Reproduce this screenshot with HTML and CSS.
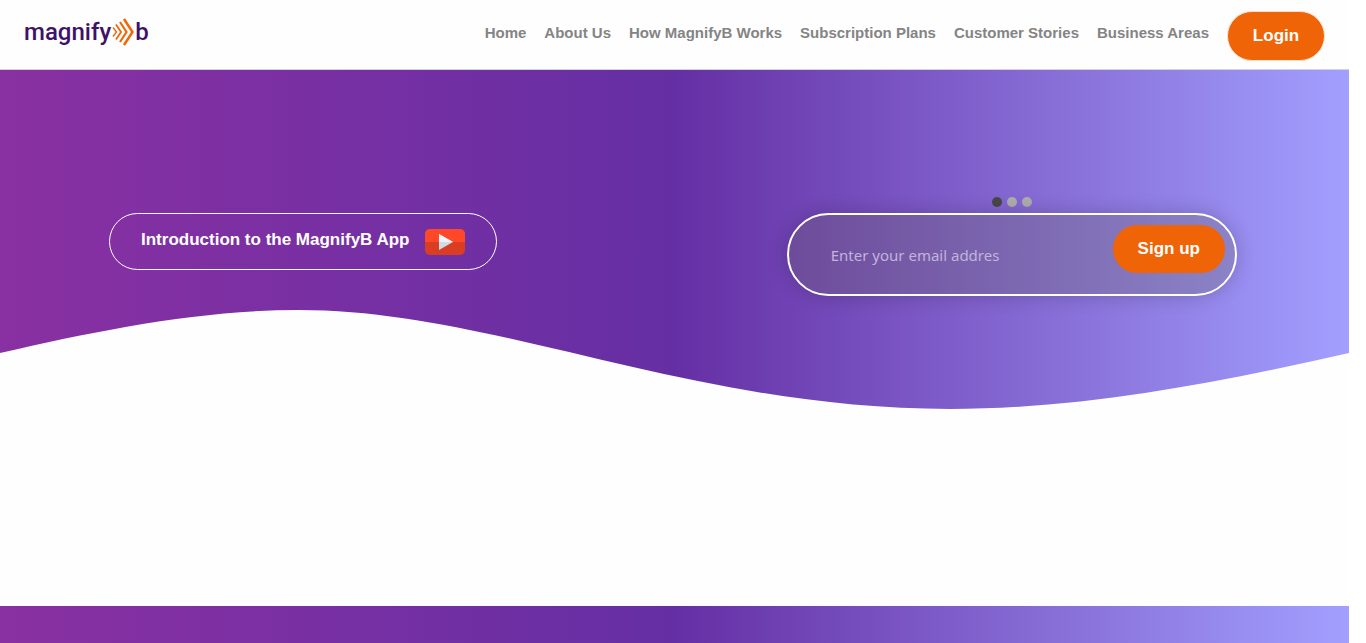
FILE: index.html
```html
<!DOCTYPE html>
<html lang="en">
<head>
<meta charset="utf-8">
<meta name="viewport" content="width=device-width, initial-scale=1">
<title>MagnifyB</title>
<link rel="stylesheet" href="styles.css">
</head>
<body>
<div class="page">
  <header class="header">
    <a class="logo" href="#" aria-label="MagnifyB home">
      <span>magnify</span>
      <svg class="logo-mark" viewBox="0 0 22 28" aria-hidden="true">
        <path d="M1 9.500L4.500 14L1 18.500" stroke-width="1.400"/>
        <path d="M4 6.500L9 14L4 21.500" stroke-width="1.800"/>
        <path d="M8 4L14.500 14L8 24" stroke-width="2.200"/>
        <path d="M12 1L20.500 14L12 27" stroke-width="2.500"/>
      </svg>
      <span>b</span>
    </a>
    <nav class="nav">
      <a class="nav-link" href="#">Home</a>
      <a class="nav-link" href="#">About Us</a>
      <a class="nav-link" href="#">How MagnifyB Works</a>
      <a class="nav-link" href="#">Subscription Plans</a>
      <a class="nav-link" href="#">Customer Stories</a>
      <a class="nav-link" href="#">Business Areas</a>
      <a class="pill login" href="#">Login</a>
    </nav>
  </header>
  <main class="main">
    <section class="hero">
      <div class="hero-columns">
        <div class="intro">
          <a class="intro-link" href="#">
            <span class="intro-text">Introduction to the MagnifyB App</span>
            <svg class="play" viewBox="0 0 40 26" aria-hidden="true">
              <rect width="40" height="26" rx="5" fill="#d93d22"/>
              <path d="M0 13V5a5 5 0 0 1 5-5h30a5 5 0 0 1 5 5v8z" fill="#ff4828"/>
              <path d="M14 5L28 13L14 21z" fill="#cfdbe6"/>
              <path d="M14 5L28 13H14z" fill="#edf4fa"/>
            </svg>
          </a>
        </div>
        <div class="signup">
          <div class="dots">
            <button class="dot dot-active" type="button" aria-label="Slide 1"></button>
            <button class="dot" type="button" aria-label="Slide 2"></button>
            <button class="dot" type="button" aria-label="Slide 3"></button>
          </div>
          <form class="signup-form">
            <input class="email" type="email" placeholder="Enter your email addres" aria-label="Email address">
            <button class="pill signup-button" type="submit">Sign up</button>
          </form>
        </div>
      </div>
      <svg class="wave" viewBox="0 0 1349 300" aria-hidden="true">
        <path d="M0 47C100 24 200 4 299 4C495 4 690 103 950 103C1085 103 1220 76 1349 47V301H0z"/>
      </svg>
    </section>
    <section class="band"></section>
  </main>
</div>
</body>
</html>
```
FILE: styles.css
```css
* {
  box-sizing: border-box;
}

body {
  margin: 0;
  background: #fff;
  font-family: "Liberation Sans", Arial, sans-serif;
}

.page {
  display: flex;
  flex-direction: column;
  min-height: 100vh;
  margin-right: 17px;
}

.header {
  display: flex;
  justify-content: space-between;
  align-items: flex-start;
  padding: 11px 24px 8px;
  background: #fefefe;
  border-bottom: 1px solid #d5d0dc;
}

.logo {
  display: flex;
  align-items: center;
  padding-top: 7px;
  color: #3d1268;
  font-family: Roboto, sans-serif;
  font-size: 24px;
  font-weight: 500;
  line-height: 28px;
  text-decoration: none;
}

.logo-mark {
  width: 22px;
  height: 28px;
  margin: 0 1px;
  fill: none;
  stroke: #ef6707;
}

.nav {
  display: flex;
  align-items: flex-start;
  gap: 18px;
}

.nav-link {
  padding-top: 12px;
  color: #848484;
  font-size: 15px;
  font-weight: 700;
  line-height: 20px;
  text-decoration: none;
}

.pill {
  border: 0;
  border-radius: 25px;
  background: #ef6407;
  color: #fff;
  font-family: inherit;
  font-size: 17px;
  font-weight: 700;
  line-height: 20px;
  text-align: center;
  text-decoration: none;
}

.login {
  width: 98px;
  padding: 14px 0;
  border: 1px solid #fbe0cc;
}

.main {
  display: flex;
  flex: 1;
  flex-direction: column;
  background: linear-gradient(90deg, #8930a2, #652fa4 50%, #a29fff);
}

.hero-columns {
  display: grid;
  grid-template-columns: 1fr 1fr;
  padding: 127px 0 10px;
}

.intro {
  padding: 16px 0 0 109px;
}

.intro-link {
  display: inline-flex;
  align-items: center;
  gap: 15px;
  padding: 15px 31px 14px;
  border: 1px solid #fff;
  border-radius: 29px;
  color: #fff;
  font-size: 17px;
  font-weight: 700;
  line-height: 22px;
  text-decoration: none;
}

.intro-text {
  padding-bottom: 4px;
}

.play {
  width: 40px;
  height: 26px;
}

.signup {
  display: flex;
  flex-direction: column;
  align-items: center;
  gap: 6px;
}

.dots {
  display: flex;
  gap: 5px;
}

.dot {
  width: 10px;
  height: 10px;
  padding: 0;
  border: 0;
  border-radius: 50%;
  background: #adadad;
}

.dot-active {
  background: #484848;
}

.signup-form {
  display: flex;
  align-items: flex-start;
  width: 450px;
  padding: 10px 10px 10px 42px;
  border: 2px solid #fff;
  border-radius: 42px;
  background: rgba(105, 105, 85, 0.26);
  box-shadow: 0 0 20px rgba(0, 0, 0, 0.2);
}

.email {
  flex: 1;
  min-width: 0;
  height: 59px;
  padding: 0;
  border: 0;
  outline: 0;
  background: none;
  color: #fff;
  font-family: "Noto Sans", sans-serif;
  font-size: 15px;
}

.email::placeholder {
  color: #c2b3da;
}

.signup-button {
  width: 112px;
  padding: 14px 0;
}

.wave {
  display: block;
  width: 100%;
  fill: #fefefe;
}

.band {
  flex: 1;
}
```
